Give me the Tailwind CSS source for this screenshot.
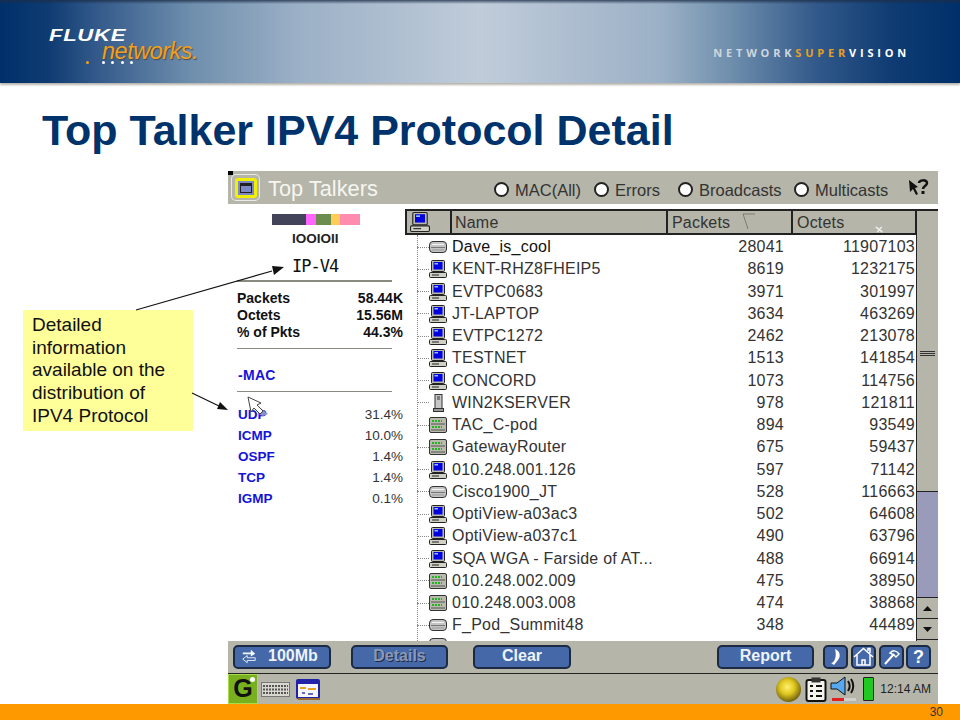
<!DOCTYPE html>
<html lang="en">
<head>
<meta charset="UTF-8">
<title>Top Talker IPV4 Protocol Detail</title>
<script src="https://cdn.jsdelivr.net/npm/@tailwindcss/browser@4"></script>
</head>
<body class="bg-white">
<svg width="0" height="0" class="absolute">
  <defs>
    <symbol id="pc" viewBox="0 0 18 18">
      <rect x="2.500" y="0.500" width="13" height="11" rx="1" fill="#b9b9ad" stroke="#222" />
      <rect x="4.500" y="2" width="9" height="7.500" fill="#0000e0" />
      <path d="M5.500 3h3.500v1.500H5.500z" fill="#8cc4ff" />
      <rect x="0.500" y="12.500" width="17" height="5" rx="1" fill="#d0d0c4" stroke="#222" />
      <path d="M3 15h7" stroke="#222" />
    </symbol>
    <symbol id="hub" viewBox="0 0 18 18">
      <rect x="0.500" y="3.500" width="17" height="11" rx="3.500" fill="#c4c4c4" stroke="#333" />
      <path d="M3 6.500h12" stroke="#f4f4f4" />
      <path d="M2 9.500h14" stroke="#777" />
      <path d="M3 12h12" stroke="#999" />
    </symbol>
    <symbol id="router" viewBox="0 0 18 18">
      <rect x="0.500" y="1.500" width="17" height="15" rx="1.500" fill="#b9b9ad" stroke="#333" />
      <path d="M3 5h10M3 11h10" stroke="#22b522" stroke-width="2" stroke-dasharray="2 1" />
      <path d="M2 8h14M2 14h14" stroke="#555" />
    </symbol>
    <symbol id="server" viewBox="0 0 18 18">
      <rect x="6" y="0.500" width="7" height="14" fill="#c8c8c8" stroke="#333" />
      <path d="M8 3h3M8 5h3" stroke="#333" />
      <rect x="4.500" y="14.500" width="10" height="3" fill="#999" stroke="#333" />
    </symbol>
  </defs>
</svg>

<div class="relative w-[960px] h-[720px] overflow-hidden flex flex-col font-['Liberation_Sans',sans-serif]">
  <!-- slide header -->
  <header class="h-[83px] shrink-0 flex items-end justify-between bg-[linear-gradient(90deg,#00306a_0%,#0e3b72_5%,#32598a_10%,#6f8fad_20%,#9bb0c6_31%,#c0ccda_50%,#9bb0c6_69%,#6f8fad_76%,#32598a_85%,#0e3b72_93%,#00306a_100%)] shadow-[0_2px_2px_#b8b4ae] relative">
    <div class="absolute inset-x-0 top-0 h-[4px] bg-gradient-to-b from-[#1c2d47]/80 to-transparent"></div>
    <div class="relative w-[160px] h-[44px] ml-[49px] mb-[11px]">
      <div class="mt-[2px] italic font-bold text-white text-[16px] leading-[12px] tracking-[0.5px] scale-x-[1.38] origin-left">FLUKE</div>
      <div class="absolute left-[53px] top-[14px] italic text-[#f0a020] text-[23.500px] leading-[18px] tracking-[-0.5px] [text-shadow:1px_1px_1px_#4a4a4a]">networks.</div>
      <div class="absolute left-[37px] top-[33px] flex items-center gap-[6.500px]">
        <span class="w-[3px] h-[3px] rounded-full bg-[#f0a020] mr-[6px]"></span>
        <span class="w-[3px] h-[3px] rounded-full bg-white"></span>
        <span class="w-[3px] h-[3px] rounded-full bg-white"></span>
        <span class="w-[3px] h-[3px] rounded-full bg-white"></span>
        <span class="w-[3px] h-[3px] rounded-full bg-white"></span>
      </div>
    </div>
    <div class="mr-[50px] mb-[24px] text-[11px] leading-[12px] font-bold tracking-[3.800px] text-[#cfd6de] whitespace-nowrap font-['Open_Sans',sans-serif]">NETWORK<span class="text-[#e8a020]">SUPER</span><span class="text-white">VISION</span></div>
  </header>

  <h1 class="h-[88px] shrink-0 pl-[42px] pt-[23px] text-[43px] leading-[48px] font-bold text-[#00336b] whitespace-nowrap">Top Talker IPV4 Protocol Detail</h1>

  <!-- captured device screen -->
  <main class="relative ml-[228px] w-[710px] h-[533px] shrink-0 flex flex-col">
    <div class="absolute left-0 top-0 w-[5px] h-[4px] bg-black"></div>

    <div class="h-[33px] shrink-0 bg-[#b5b5a9] flex items-center pl-[3px] pr-[9px]">
      <div class="w-[29px] h-[27px] rounded-[5px] border border-white/70 flex items-center justify-center bg-[#b5b5a9]">
        <div class="w-[22px] h-[20px] rounded-[3px] border-[3px] border-[#f0f000] bg-[#7b88c6] flex items-center justify-center">
          <div class="w-[12px] h-[10px] border border-[#222] border-t-[3px]"></div>
        </div>
      </div>
      <div class="ml-[8px] pt-[3px] text-[#f6f6f0] text-[21.800px] leading-[24px] whitespace-nowrap">Top Talkers</div>
      <div class="ml-auto flex items-center text-[16.500px] leading-[20px] text-[#333]">
        <span class="w-[15px] h-[15px] rounded-full border-[2px] border-[#222] bg-white mr-[6px] mt-[3px]"></span>
        <span class="w-[79px] pt-[4px] whitespace-nowrap">MAC(All)</span>
        <span class="w-[15px] h-[15px] rounded-full border-[2px] border-[#222] bg-white mr-[6px] mt-[3px]"></span>
        <span class="w-[63px] pt-[4px] whitespace-nowrap">Errors</span>
        <span class="w-[15px] h-[15px] rounded-full border-[2px] border-[#222] bg-white mr-[6px] mt-[3px]"></span>
        <span class="w-[95px] pt-[4px] whitespace-nowrap">Broadcasts</span>
        <span class="w-[15px] h-[15px] rounded-full border-[2px] border-[#222] bg-white mr-[6px] mt-[3px]"></span>
        <span class="w-[93px] pt-[4px] whitespace-nowrap">Multicasts</span>
        <svg width="21" height="20" viewBox="0 0 21 20">
          <path d="M1 2l9 7-3 1 3 6-2 1-3-6-3 3z" fill="#111" />
          <path d="M11 5c0-3 8-4 8 0 0 3-4 3-4 6" fill="none" stroke="#111" stroke-width="2.500" />
          <rect x="13.500" y="13" width="3" height="3" fill="#111" />
        </svg>
      </div>
    </div>

    <div class="flex-1 min-h-0 flex">
      <!-- left protocol panel -->
      <aside class="w-[177px] shrink-0 bg-white flex flex-col pl-[9px] pr-[2px]">
        <div class="flex h-[11px] mt-[10px] ml-[35px]">
          <span class="w-[34px] bg-[#43435a]"></span>
          <span class="w-[10px] bg-[#ff66ff]"></span>
          <span class="w-[15px] bg-[#6b8e4e]"></span>
          <span class="w-[9px] bg-[#ffcc55]"></span>
          <span class="w-[20px] bg-[#ff8caf]"></span>
        </div>
        <div class="mt-[7px] h-[14px] ml-[55px] font-bold text-[13.500px] leading-[14px] text-[#222]">IOOIOII</div>
        <div class="mt-[11px] ml-[55px] h-[18px] text-[17px] leading-[18px] text-[#111] font-['DejaVu_Sans_Mono',monospace] tracking-[-1px]">IP-V4</div>
        <div class="mt-[5px] h-[2px] w-[155px] bg-[#8a8a80] shrink-0"></div>
        <dl class="mt-[8px] text-[14px] leading-[17px] font-bold text-[#111]">
          <div class="flex justify-between"><dt>Packets</dt><dd>58.44K</dd></div>
          <div class="flex justify-between"><dt>Octets</dt><dd>15.56M</dd></div>
          <div class="flex justify-between"><dt>% of Pkts</dt><dd>44.3%</dd></div>
        </dl>
        <div class="mt-[7px] h-[1px] w-[155px] bg-[#8a8a80] shrink-0"></div>
        <div class="mt-[17px] ml-[1px] h-[18px] text-[#1414d8] font-bold text-[14px] leading-[18px] tracking-[0.3px]">-MAC</div>
        <div class="mt-[7px] h-[1px] w-[155px] bg-[#8a8a80] shrink-0"></div>
        <ul class="mt-[12px] ml-[1px] text-[13.500px] leading-[21px]">
          <li class="flex justify-between"><span class="font-bold text-[#1414d8]">UDP</span><span class="text-[#333]">31.4%</span></li>
          <li class="flex justify-between"><span class="font-bold text-[#1414d8]">ICMP</span><span class="text-[#333]">10.0%</span></li>
          <li class="flex justify-between"><span class="font-bold text-[#1414d8]">OSPF</span><span class="text-[#333]">1.4%</span></li>
          <li class="flex justify-between"><span class="font-bold text-[#1414d8]">TCP</span><span class="text-[#333]">1.4%</span></li>
          <li class="flex justify-between"><span class="font-bold text-[#1414d8]">IGMP</span><span class="text-[#333]">0.1%</span></li>
        </ul>
      </aside>

      <!-- talkers table -->
      <section class="flex-1 min-w-0 flex flex-col pt-[5px] bg-white">
        <div class="h-[26px] shrink-0 flex bg-[#b5b5a9] border-y-[2px] border-[#222] border-l-[2px] text-[16px] leading-[24px] tracking-[0.2px] text-[#333]">
          <div class="w-[45px] flex items-center pl-[3px] border-r-[2px] border-[#222]">
            <svg class="w-[20px] h-[20px]"><use href="#pc" /></svg>
          </div>
          <div class="w-[216px] pl-[3px] border-r-[2px] border-[#222]">Name</div>
          <div class="w-[125px] pl-[4px] border-r-[2px] border-[#222] relative">Packets
            <svg class="absolute left-[74px] top-[2px]" width="14" height="17" viewBox="0 0 14 17"><path d="M1 1h12M1 1l5 15" fill="none" stroke="#7d7d74" /></svg>
          </div>
          <div class="w-[124px] pl-[4px] border-r-[2px] border-[#222] relative">Octets
            <svg class="absolute left-[82px] top-[15px]" width="9" height="7" viewBox="0 0 12 9"><path d="M1 1l9 7M9 1L3 8" stroke="#eee" stroke-width="2" /></svg>
          </div>
          <div class="flex-1 -mb-[2px] bg-[#b5b5a9]"></div>
        </div>
        <div class="flex-1 min-h-0 flex relative">
          <div class="absolute left-[12px] top-0 bottom-0 border-l border-dotted border-[#888]"></div>
          <div class="w-[511px] pt-[1px] overflow-hidden text-[16px] tracking-[0.25px] text-[#333]">
            <div class="flex h-[22.250px] items-center"><span class="w-[12px] ml-[12px] border-t border-dotted border-[#888]"></span><svg class="w-[18px] h-[18px] mr-[5px]"><use href="#hub" /></svg><span class="w-[200px] text-[#111] whitespace-nowrap">Dave_is_cool</span><span class="w-[132px] text-right">28041</span><span class="w-[131px] text-right">11907103</span></div>
            <div class="flex h-[22.250px] items-center"><span class="w-[12px] ml-[12px] border-t border-dotted border-[#888]"></span><svg class="w-[18px] h-[18px] mr-[5px]"><use href="#pc" /></svg><span class="w-[200px] whitespace-nowrap">KENT-RHZ8FHEIP5</span><span class="w-[132px] text-right">8619</span><span class="w-[131px] text-right">1232175</span></div>
            <div class="flex h-[22.250px] items-center"><span class="w-[12px] ml-[12px] border-t border-dotted border-[#888]"></span><svg class="w-[18px] h-[18px] mr-[5px]"><use href="#pc" /></svg><span class="w-[200px] whitespace-nowrap">EVTPC0683</span><span class="w-[132px] text-right">3971</span><span class="w-[131px] text-right">301997</span></div>
            <div class="flex h-[22.250px] items-center"><span class="w-[12px] ml-[12px] border-t border-dotted border-[#888]"></span><svg class="w-[18px] h-[18px] mr-[5px]"><use href="#pc" /></svg><span class="w-[200px] whitespace-nowrap">JT-LAPTOP</span><span class="w-[132px] text-right">3634</span><span class="w-[131px] text-right">463269</span></div>
            <div class="flex h-[22.250px] items-center"><span class="w-[12px] ml-[12px] border-t border-dotted border-[#888]"></span><svg class="w-[18px] h-[18px] mr-[5px]"><use href="#pc" /></svg><span class="w-[200px] whitespace-nowrap">EVTPC1272</span><span class="w-[132px] text-right">2462</span><span class="w-[131px] text-right">213078</span></div>
            <div class="flex h-[22.250px] items-center"><span class="w-[12px] ml-[12px] border-t border-dotted border-[#888]"></span><svg class="w-[18px] h-[18px] mr-[5px]"><use href="#pc" /></svg><span class="w-[200px] whitespace-nowrap">TESTNET</span><span class="w-[132px] text-right">1513</span><span class="w-[131px] text-right">141854</span></div>
            <div class="flex h-[22.250px] items-center"><span class="w-[12px] ml-[12px] border-t border-dotted border-[#888]"></span><svg class="w-[18px] h-[18px] mr-[5px]"><use href="#pc" /></svg><span class="w-[200px] whitespace-nowrap">CONCORD</span><span class="w-[132px] text-right">1073</span><span class="w-[131px] text-right">114756</span></div>
            <div class="flex h-[22.250px] items-center"><span class="w-[12px] ml-[12px] border-t border-dotted border-[#888]"></span><svg class="w-[18px] h-[18px] mr-[5px]"><use href="#server" /></svg><span class="w-[200px] whitespace-nowrap">WIN2KSERVER</span><span class="w-[132px] text-right">978</span><span class="w-[131px] text-right">121811</span></div>
            <div class="flex h-[22.250px] items-center"><span class="w-[12px] ml-[12px] border-t border-dotted border-[#888]"></span><svg class="w-[18px] h-[18px] mr-[5px]"><use href="#router" /></svg><span class="w-[200px] whitespace-nowrap">TAC_C-pod</span><span class="w-[132px] text-right">894</span><span class="w-[131px] text-right">93549</span></div>
            <div class="flex h-[22.250px] items-center"><span class="w-[12px] ml-[12px] border-t border-dotted border-[#888]"></span><svg class="w-[18px] h-[18px] mr-[5px]"><use href="#router" /></svg><span class="w-[200px] whitespace-nowrap">GatewayRouter</span><span class="w-[132px] text-right">675</span><span class="w-[131px] text-right">59437</span></div>
            <div class="flex h-[22.250px] items-center"><span class="w-[12px] ml-[12px] border-t border-dotted border-[#888]"></span><svg class="w-[18px] h-[18px] mr-[5px]"><use href="#pc" /></svg><span class="w-[200px] whitespace-nowrap">010.248.001.126</span><span class="w-[132px] text-right">597</span><span class="w-[131px] text-right">71142</span></div>
            <div class="flex h-[22.250px] items-center"><span class="w-[12px] ml-[12px] border-t border-dotted border-[#888]"></span><svg class="w-[18px] h-[18px] mr-[5px]"><use href="#hub" /></svg><span class="w-[200px] whitespace-nowrap">Cisco1900_JT</span><span class="w-[132px] text-right">528</span><span class="w-[131px] text-right">116663</span></div>
            <div class="flex h-[22.250px] items-center"><span class="w-[12px] ml-[12px] border-t border-dotted border-[#888]"></span><svg class="w-[18px] h-[18px] mr-[5px]"><use href="#pc" /></svg><span class="w-[200px] whitespace-nowrap">OptiView-a03ac3</span><span class="w-[132px] text-right">502</span><span class="w-[131px] text-right">64608</span></div>
            <div class="flex h-[22.250px] items-center"><span class="w-[12px] ml-[12px] border-t border-dotted border-[#888]"></span><svg class="w-[18px] h-[18px] mr-[5px]"><use href="#pc" /></svg><span class="w-[200px] whitespace-nowrap">OptiView-a037c1</span><span class="w-[132px] text-right">490</span><span class="w-[131px] text-right">63796</span></div>
            <div class="flex h-[22.250px] items-center"><span class="w-[12px] ml-[12px] border-t border-dotted border-[#888]"></span><svg class="w-[18px] h-[18px] mr-[5px]"><use href="#pc" /></svg><span class="w-[200px] whitespace-nowrap">SQA WGA - Farside of AT...</span><span class="w-[132px] text-right">488</span><span class="w-[131px] text-right">66914</span></div>
            <div class="flex h-[22.250px] items-center"><span class="w-[12px] ml-[12px] border-t border-dotted border-[#888]"></span><svg class="w-[18px] h-[18px] mr-[5px]"><use href="#router" /></svg><span class="w-[200px] whitespace-nowrap">010.248.002.009</span><span class="w-[132px] text-right">475</span><span class="w-[131px] text-right">38950</span></div>
            <div class="flex h-[22.250px] items-center"><span class="w-[12px] ml-[12px] border-t border-dotted border-[#888]"></span><svg class="w-[18px] h-[18px] mr-[5px]"><use href="#router" /></svg><span class="w-[200px] whitespace-nowrap">010.248.003.008</span><span class="w-[132px] text-right">474</span><span class="w-[131px] text-right">38868</span></div>
            <div class="flex h-[22.250px] items-center"><span class="w-[12px] ml-[12px] border-t border-dotted border-[#888]"></span><svg class="w-[18px] h-[18px] mr-[5px]"><use href="#hub" /></svg><span class="w-[200px] whitespace-nowrap">F_Pod_Summit48</span><span class="w-[132px] text-right">348</span><span class="w-[131px] text-right">44489</span></div>
            <!-- next row is cut off by the toolbar, only the icon top shows -->
            <div class="flex h-[22.250px] items-start"><span class="w-[12px] ml-[12px] mt-[10px] border-t border-dotted border-[#888]"></span><svg class="w-[18px] h-[18px] -mt-[2px]"><use href="#hub" /></svg></div>
          </div>
          <!-- scrollbar -->
          <div class="w-[22px] shrink-0 flex flex-col bg-[#b5b5a9] border-l-[1.500px] border-[#222]">
            <div class="h-[257px] shrink-0 pt-[116px] px-[3px] border-b border-[#222]">
              <div class="h-[5px] border-y border-[#333] relative"><div class="absolute inset-x-0 top-[1px] h-[1px] bg-[#333]"></div></div>
            </div>
            <div class="h-[106px] shrink-0 bg-[#9a9aba] border-b border-[#222]"></div>
            <div class="h-[21px] shrink-0 border-b border-[#222] flex items-center justify-center"><svg width="9" height="5" viewBox="0 0 9 5"><path d="M4.500 0l4.500 5H0z" fill="#111" /></svg></div>
            <div class="h-[21px] shrink-0 border-b border-[#222] flex items-center justify-center"><svg width="9" height="5" viewBox="0 0 9 5"><path d="M0 0h9L4.500 5z" fill="#111" /></svg></div>
          </div>
        </div>
      </section>
    </div>

    <!-- button toolbar -->
    <div class="h-[33px] shrink-0 bg-[#b5b5a9] border-b border-[#222] flex items-center pl-[5px] pr-[7px] pb-[1px] font-bold text-[16px] leading-[18px] text-[#eef3fa]">
      <button class="w-[98px] h-[24px] pb-[2px] rounded-[5px] border-2 border-[#1d2a44] bg-[#4468a8] flex items-center pl-[6px] gap-[11px]">
        <svg width="16" height="18" viewBox="0 0 18 18"><path d="M2 5h9V2l5 4.500-5 3V7H2z" fill="#f4f8ff" /><path d="M16 11H7V8.500L2 12.500l5 4V14h9z" fill="none" stroke="#f4f8ff" /></svg>
        <span>100Mb</span>
      </button>
      <button class="ml-[20px] w-[97px] h-[24px] pb-[2px] rounded-[5px] border-2 border-[#1d2a44] bg-[#4468a8] text-[#8a98b8] [text-shadow:1px_1px_0_#1d2a44]">Details</button>
      <button class="ml-[25px] w-[98px] h-[24px] pb-[2px] rounded-[5px] border-2 border-[#1d2a44] bg-[#4468a8]">Clear</button>
      <button class="ml-auto w-[97px] h-[24px] pb-[2px] rounded-[5px] border-2 border-[#1d2a44] bg-[#4468a8]">Report</button>
      <button class="ml-[9px] w-[25px] h-[24px] rounded-[5px] border-2 border-[#1d2a44] bg-[#4468a8] flex items-center justify-center">
        <svg width="14" height="18" viewBox="0 0 14 18"><path d="M6 1c5 2 6 7 3 11l-4 5-3-2c2 0 3-2 4-4 1-3 1-6 0-10z" fill="#fff" /></svg>
      </button>
      <button class="ml-[3px] w-[25px] h-[24px] rounded-[5px] border-2 border-[#1d2a44] bg-[#4468a8] flex items-center justify-center">
        <svg width="21" height="19" viewBox="0 0 21 19"><path d="M1 10L10.500 1.500 20 10M4 8v10h13V8M15 4V1.500h2V6M9 18v-5h3v5" fill="none" stroke="#fff" stroke-width="1.500" /></svg>
      </button>
      <button class="ml-[3px] w-[25px] h-[24px] rounded-[5px] border-2 border-[#1d2a44] bg-[#4468a8] flex items-center justify-center">
        <svg width="18" height="18" viewBox="0 0 18 18"><path d="M2 16L11 6" stroke="#fff" stroke-width="2" /><path d="M7 5c3-3 6-3 9 1l-3 3-2-2z" fill="none" stroke="#fff" stroke-width="1.500" /></svg>
      </button>
      <button class="ml-[2px] w-[25px] h-[24px] rounded-[5px] border-2 border-[#1d2a44] bg-[#4468a8] text-white text-[18px] leading-[18px]">?</button>
    </div>

    <!-- status bar -->
    <div class="h-[30px] shrink-0 bg-[#b5b5a9] flex items-center pr-[7px]">
      <div class="relative w-[30px] h-full pb-[2px] bg-[#78b020] border border-[#a8dc48] flex items-center justify-center font-bold text-[25px] leading-[24px] text-[#111]">G
        <span class="absolute right-[2px] top-[2px] w-[5px] h-[5px] rounded-full bg-white"></span>
      </div>
      <svg class="ml-[3px]" width="29" height="15" viewBox="0 0 29 15">
        <rect x="0.500" y="0.500" width="28" height="14" fill="#d8d8d0" stroke="#777" />
        <path d="M2 4h25M2 7.500h25M2 11h25" stroke="#555" stroke-dasharray="2 1" stroke-width="2" />
      </svg>
      <svg class="ml-[6px]" width="24" height="21" viewBox="0 0 24 21">
        <rect x="1" y="1" width="22" height="18" rx="1" fill="#f4f4ff" stroke="#2222a8" stroke-width="2" />
        <rect x="2" y="2" width="20" height="3" fill="#2222a8" />
        <path d="M4 9h6M12 10h8" stroke="#e8a020" stroke-width="2" />
        <path d="M6 14h3M12 15h5" stroke="#6a6ab0" stroke-width="2" />
        <path d="M2 20h22" stroke="#9a6a30" stroke-width="2" />
      </svg>
      <div class="ml-auto w-[25px] h-[25px] rounded-full bg-[radial-gradient(circle_at_45%_40%,#fff070_0%,#e0c820_35%,#7a6a10_70%,#222_100%)]"></div>
      <svg class="ml-[4px]" width="22" height="25" viewBox="0 0 22 25">
        <rect x="1.500" y="3" width="19" height="21" rx="2" fill="#f4f4ec" stroke="#111" stroke-width="2" />
        <rect x="6.500" y="0.500" width="9" height="5" fill="#333" />
        <path d="M5 9h3M11 9h6M5 14h3M11 14h6M5 19h3M11 19h6" stroke="#111" stroke-width="2" />
      </svg>
      <svg class="ml-[3px]" width="27" height="27" viewBox="0 0 27 27">
        <path d="M1 7h6l8-6v18l-8-6H1z" fill="#58a8f0" stroke="#111" />
        <path d="M18 5c2 3 2 7 0 10M21 3c3 4 3 10 0 14" fill="none" stroke="#111" stroke-width="2" />
        <rect x="2" y="22" width="24" height="3" fill="#cfcfcf" />
        <rect x="2" y="22" width="12" height="3" fill="#e02020" />
      </svg>
      <div class="ml-[6px] w-[11px] h-[24px] border border-[#222] bg-[#22c822] rounded-[1px]"></div>
      <div class="ml-[6px] text-[12px] leading-[16px] text-[#222] whitespace-nowrap">12:14 AM</div>
    </div>
  </main>

  <div class="absolute left-0 top-[704px] w-full h-[16px] bg-[#ff9900] text-right pr-[17px] text-[12px] leading-[16px] text-[#333]">30</div>

  <!-- callout over the slide -->
  <div class="absolute left-[23px] top-[310px] w-[170px] h-[121px] bg-[#ffff99] pl-[9px] pt-[4px] text-[19px] leading-[22.700px] text-[#111] whitespace-nowrap">
    Detailed<br>information<br>available on the<br>distribution of<br>IPV4 Protocol
  </div>
  <svg class="absolute left-0 top-0 pointer-events-none" width="960" height="720" viewBox="0 0 960 720">
    <path d="M136 310L272 271" stroke="#111" stroke-width="1.200" />
    <path d="M284 267l-12 -1 2 9z" fill="#111" />
    <path d="M192 393L219 406" stroke="#111" stroke-width="1.200" />
    <path d="M228 410l-11 -1 3 -7z" fill="#111" />
    <path d="M252 401l16 13-5 2-3-1z" fill="#8a90c0" />
    <path d="M248 397l13 6-4 2 6 6-3 3-6-6-3 4z" fill="#fff" stroke="#444" />
  </svg>
</div>
</body>
</html>
